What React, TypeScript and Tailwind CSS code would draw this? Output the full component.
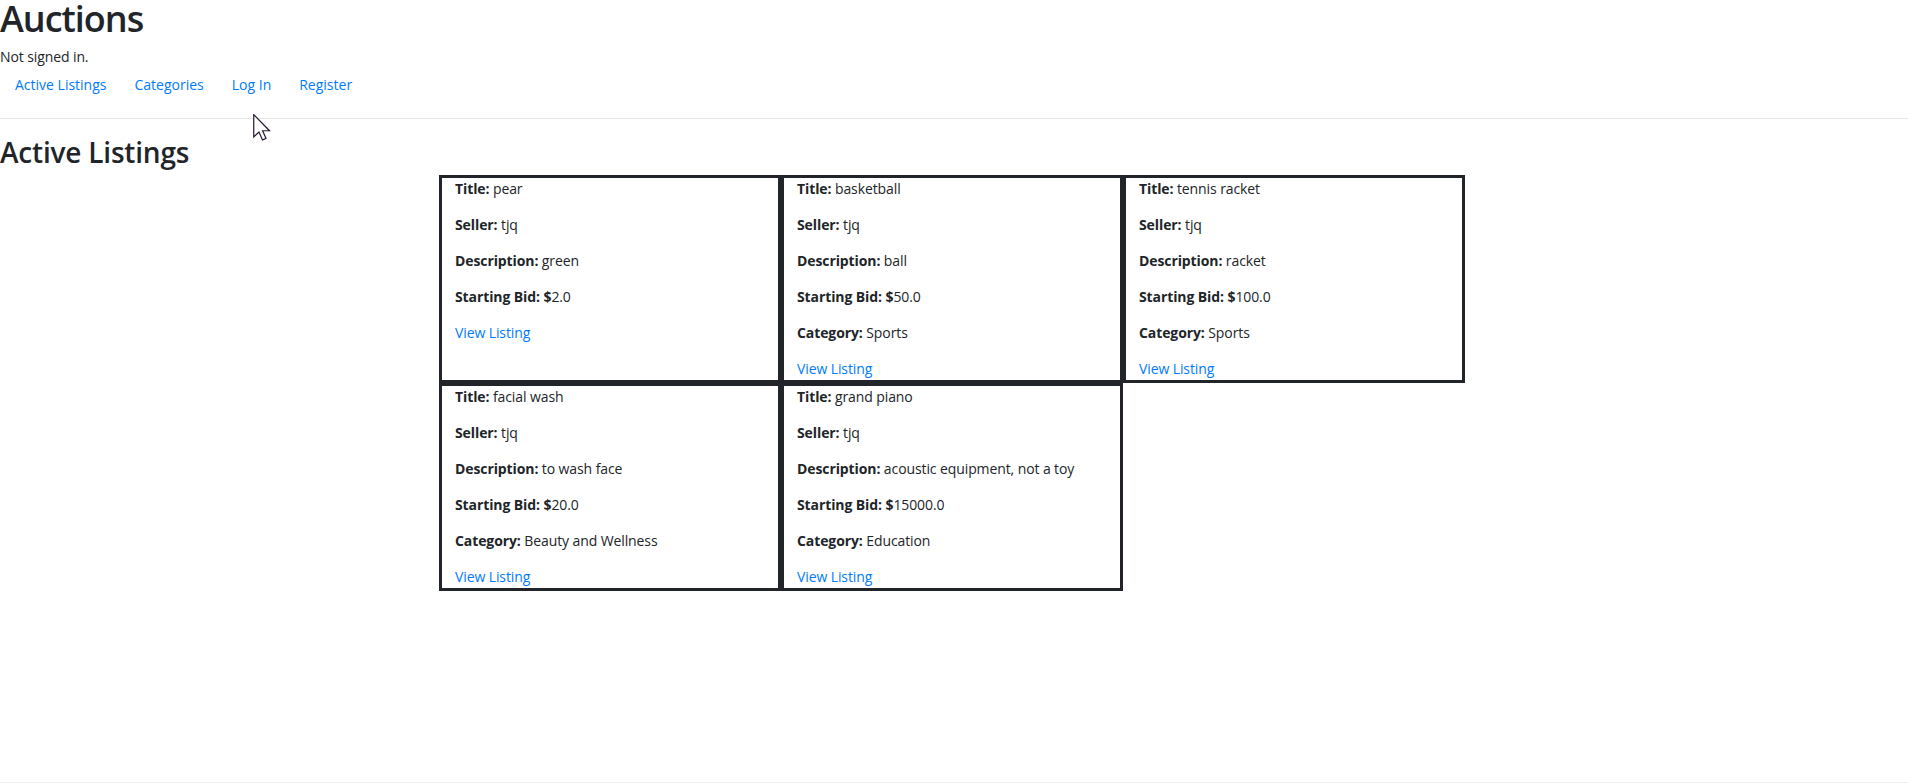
type Listing = {
  title: string
  seller: string
  description: string
  bid: string
  category?: string
}

const listings: Listing[] = [
  { title: "pear", seller: "tjq", description: "green", bid: "2.0" },
  { title: "basketball", seller: "tjq", description: "ball", bid: "50.0", category: "Sports" },
  { title: "tennis racket", seller: "tjq", description: "racket", bid: "100.0", category: "Sports" },
  { title: "facial wash", seller: "tjq", description: "to wash face", bid: "20.0", category: "Beauty and Wellness" },
  { title: "grand piano", seller: "tjq", description: "acoustic equipment, not a toy", bid: "15000.0", category: "Education" },
]

function Field({ label, value }: { label: string; value: string }) {
  return (
    <p className="mb-[15px] leading-[21px]">
      <strong className="font-bold">{label}:</strong> {value}
    </p>
  )
}

function ListingCard({ item }: { item: Listing }) {
  return (
    <div className="w-[342px] border-[3px] border-[#212529] pl-[13px] pb-[1px]">
      <Field label="Title" value={item.title} />
      <Field label="Seller" value={item.seller} />
      <Field label="Description" value={item.description} />
      <p className="mb-[15px] leading-[21px]">
        <strong className="font-bold">Starting Bid: $</strong>
        {item.bid}
      </p>
      {item.category && <Field label="Category" value={item.category} />}
      <a href="#" className="block leading-[21px] text-[#007bff]">View Listing</a>
    </div>
  )
}

function Cursor() {
  return (
    <svg
      className="absolute left-[253px] top-[114px]"
      width="19"
      height="27"
      viewBox="0 0 14 20"
    >
      <path
        d="M0.5 0.5 L0.5 17 L4.4 13.3 L7 19.2 L9.6 18.1 L7.1 12.4 L12.2 12.4 Z"
        fill="#ffffff"
        stroke="#2a1a33"
        strokeWidth="0.9"
        strokeLinejoin="miter"
      />
    </svg>
  )
}

const navItems = ["Active Listings", "Categories", "Log In", "Register"]

export default function App() {
  return (
    <div
      className="relative h-[783px] border-b border-[#efefef] bg-white text-[14px] text-[#212529]"
      style={{ fontFamily: '"Open Sans", "Noto Sans", sans-serif' }}
    >
      <h1 className="text-[36px] font-semibold leading-[38px] tracking-[-1px]">Auctions</h1>
      <div className="mt-[9px] leading-[20px] tracking-[-0.1px]">Not signed in.</div>
      <ul className="flex pl-[1px]">
        {navItems.map((label) => (
          <li key={label}>
            <a href="#" className="block px-[14px] py-2 leading-[20px] text-[#007bff]">{label}</a>
          </li>
        ))}
      </ul>
      <hr className="mt-[15px] border-t border-[#e5e5e5]" />
      <h2 className="mt-[16px] mb-[6px] text-[28px] font-semibold leading-[34px] tracking-[-0.2px]">Active Listings</h2>
      <div className="mx-auto flex w-[1030px] flex-wrap tracking-[-0.1px]">
        {listings.map((item) => (
          <ListingCard key={item.title} item={item} />
        ))}
      </div>
      <Cursor />
    </div>
  )
}
